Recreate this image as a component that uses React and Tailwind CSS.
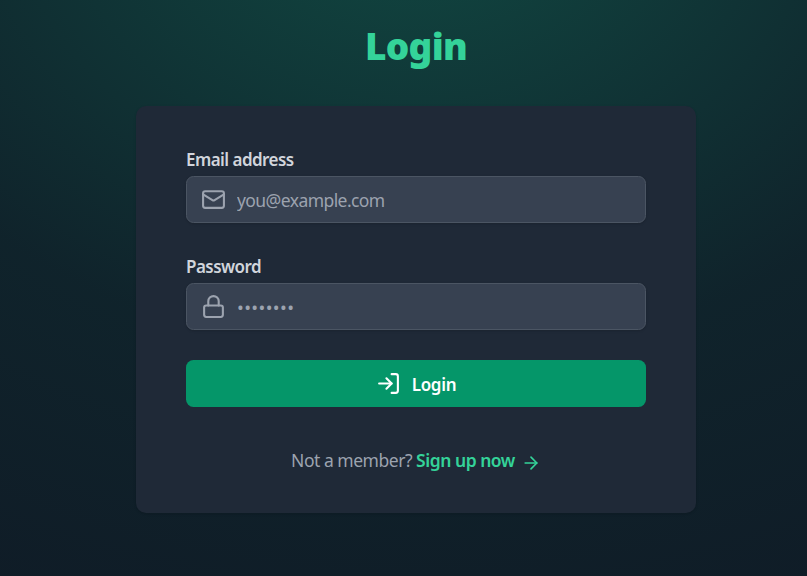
import React from "react";

const iconProps = {
  viewBox: "0 0 24 24",
  fill: "none",
  stroke: "currentColor",
  strokeWidth: 2,
  strokeLinecap: "round",
  strokeLinejoin: "round",
};

function MailIcon() {
  return (
    <svg {...iconProps} className="size-[25px] shrink-0">
      <rect x="2" y="4" width="20" height="16" rx="2" />
      <path d="m22 7-8.97 5.7a1.94 1.94 0 0 1-2.06 0L2 7" />
    </svg>
  );
}

function LockIcon() {
  return (
    <svg {...iconProps} className="size-[25px] shrink-0">
      <rect x="3" y="11" width="18" height="11" rx="2" />
      <path d="M7 11V7a5 5 0 0 1 10 0v4" />
    </svg>
  );
}

function LogInIcon() {
  return (
    <svg {...iconProps} className="size-[25px] shrink-0">
      <path d="M15 3h4a2 2 0 0 1 2 2v14a2 2 0 0 1-2 2h-4" />
      <path d="m10 17 5-5-5-5" />
      <path d="M15 12H3" />
    </svg>
  );
}

function ArrowIcon() {
  return (
    <svg {...iconProps} className="ml-[6px] mt-[4px] size-5 shrink-0">
      <path d="M5 12h14" />
      <path d="m12 5 7 7-7 7" />
    </svg>
  );
}

function Field({ id, label, type, placeholder, icon, inputClass }) {
  return (
    <div>
      <label htmlFor={id} className="block h-[25px] text-[17px] leading-[27px] font-semibold tracking-[-0.55px] text-gray-300">
        {label}
      </label>
      <div className="mt-[5px] flex h-[47px] items-center rounded-[7.5px] border border-[#4b5563] bg-[#374151] pl-[14px] text-[#9ca3af] shadow-sm">
        {icon}
        <input
          id={id}
          type={type}
          placeholder={placeholder}
          className={"ml-[11px] h-full min-w-0 flex-1 bg-transparent pt-[1px] outline-none placeholder:text-[#9ca3af] " + inputClass}
        />
      </div>
    </div>
  );
}

export default function App() {
  return (
    <div className="h-[576px] w-full overflow-hidden bg-[#111827] font-['Noto_Sans','Open_Sans',sans-serif]">
      <div className="flex h-full w-[832px] flex-col items-center bg-[radial-gradient(1358px_1040px_at_416px_-110px,rgba(16,185,129,0.3)_0%,rgba(10,80,60,0.2)_45%,rgba(0,0,0,0.1)_100%)]">
        <h1 className="mt-[23px] h-[45px] text-[37px] leading-[45px] font-black tracking-[-0.7px] text-[#34d399]">Login</h1>
        <main className="mt-[38px] h-[407px] w-[560px] rounded-[10px] bg-[#1f2937] px-[50px] pt-[40px] shadow-sm">
          <form className="flex flex-col gap-[30px]">
            <Field id="email" label="Email address" type="email" placeholder="you@example.com" icon={<MailIcon />} inputClass="text-[17.5px] tracking-[-0.57px]" />
            <Field id="password" label="Password" type="password" placeholder="••••••••" icon={<LockIcon />} inputClass="text-[18px] tracking-[0.4px]" />
            <button type="button" className="flex h-[47px] w-full items-center justify-center gap-[11px] rounded-[7.5px] bg-[#059669] text-[17px] font-semibold text-white">
              <LogInIcon />
              <span className="pt-[2px] tracking-[-0.3px]">Login</span>
            </button>
          </form>
          <p className="mt-[41px] flex h-[25px] items-center justify-center text-[17.5px] tracking-[-0.48px] text-[#9ca3af]">
            <span className="whitespace-pre">Not a member? </span>
            <a href="#" className="flex items-center font-semibold text-[#34d399]">
              Sign up now
              <ArrowIcon />
            </a>
          </p>
        </main>
      </div>
    </div>
  );
}
